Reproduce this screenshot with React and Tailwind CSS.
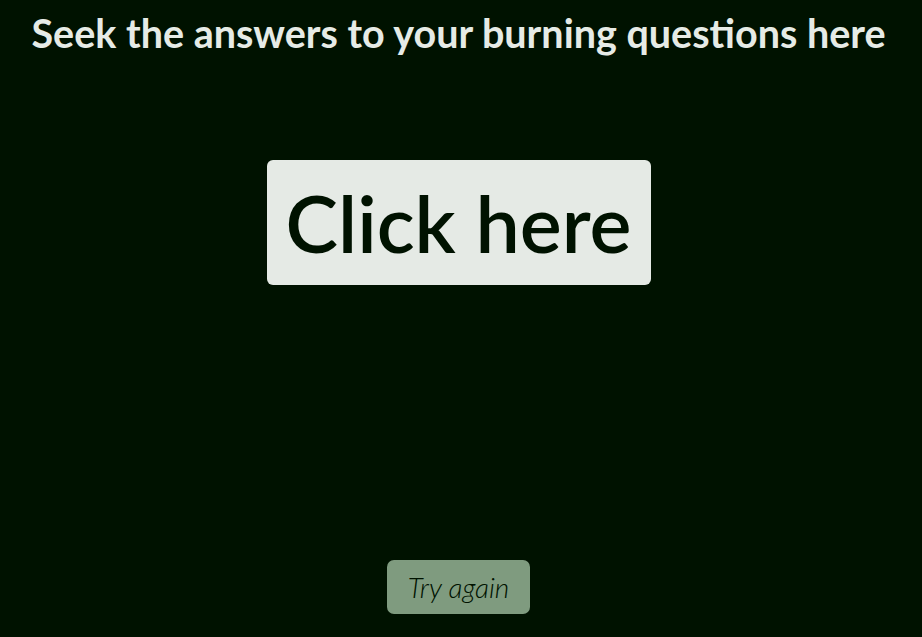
import React from "react";

export default function App() {
  return (
    <div className="min-h-screen w-full bg-[#001200] flex flex-col items-center pr-[5px] font-['Lato',sans-serif]">
      <h1 className="mt-[9px] text-[39.5px] leading-[48px] font-bold text-[#e6ebe6] whitespace-nowrap">
        Seek the answers to your burning questions here
      </h1>
      <button className="mt-[103px] w-[384px] h-[125px] rounded-[6px] bg-[#e5eae5] text-[#001200] text-[79px] font-semibold leading-none flex items-center justify-center">
        Click here
      </button>
      <button className="mt-[275px] w-[143px] h-[54px] rounded-[7px] bg-[#7f9b7f] text-[#001200] text-[28px] italic font-light flex items-center justify-center">
        Try again
      </button>
    </div>
  );
}
